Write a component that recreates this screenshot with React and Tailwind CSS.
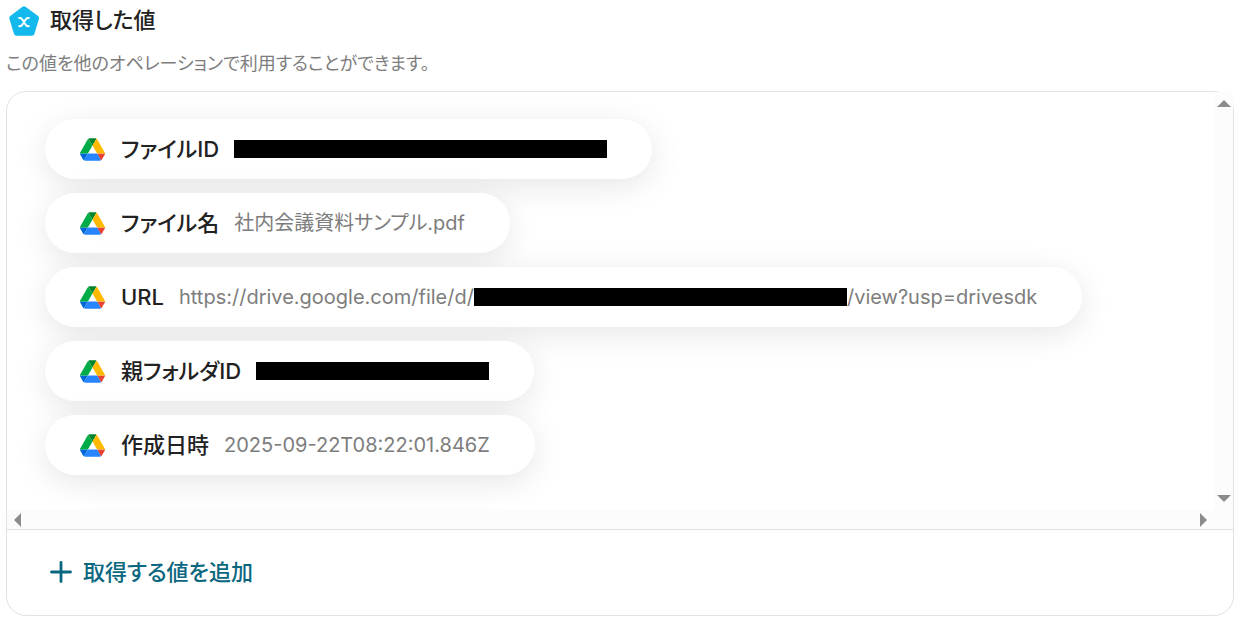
import React from 'react';

const items = [
  { label: 'ファイルID', hidden: 'w-[373px]' },
  { label: 'ファイル名', before: '社内会議資料サンプル.pdf' },
  {
    label: 'URL',
    before: 'https://drive.google.com/file/d/',
    hidden: 'w-[373px]',
    after: '/view?usp=drivesdk',
  },
  { label: '親フォルダID', hidden: 'w-[233px]' },
  { label: '作成日時', before: '2025-09-22T08:22:01.846Z' },
];

const BadgeIcon = () => (
  <svg viewBox="0 0 32 32" className="size-8 shrink-0" aria-hidden="true">
    <path
      d="M16 4.8 28.6 14 24 29.2H8.4L3.8 14Z"
      fill="#13b9ec"
      stroke="#13b9ec"
      strokeWidth="5"
      strokeLinejoin="round"
    />
    <path
      d="M11.2 14h.6c1.2 0 1.9.4 2.5 1.4l3.4 5.4c.6 1 1.3 1.4 2.5 1.4h.6M20.8 14h-.6c-1.2 0-1.9.4-2.5 1.4l-3.4 5.4c-.6 1-1.3 1.4-2.5 1.4h-.6"
      fill="none"
      stroke="#fff"
      strokeWidth="2"
      strokeLinecap="round"
    />
  </svg>
);

const DriveIcon = () => (
  <svg viewBox="0 0 87.3 78" className="h-[23px] w-[25px] shrink-0" aria-hidden="true">
    <path
      d="m6.6 66.85 3.85 6.65c.8 1.4 1.95 2.5 3.3 3.3l13.75-23.8h-27.5c0 1.55.4 3.1 1.2 4.5z"
      fill="#0066da"
    />
    <path
      d="m43.65 25-13.75-23.8c-1.35.8-2.5 1.9-3.3 3.3l-25.4 44a9.06 9.06 0 0 0 -1.2 4.5h27.5z"
      fill="#00ac47"
    />
    <path
      d="m73.55 76.8c1.35-.8 2.5-1.9 3.3-3.3l1.6-2.75 7.65-13.25c.8-1.4 1.2-2.95 1.2-4.5h-27.502l5.852 11.5z"
      fill="#ea4335"
    />
    <path
      d="m43.65 25 13.75-23.8c-1.35-.8-2.9-1.2-4.5-1.2h-18.5c-1.6 0-3.15.45-4.5 1.2z"
      fill="#00832d"
    />
    <path
      d="m59.8 53h-32.3l-13.75 23.8c1.35.8 2.9 1.2 4.5 1.2h50.8c1.6 0 3.15-.45 4.5-1.2z"
      fill="#2684fc"
    />
    <path
      d="m73.4 26.5-12.7-22c-.8-1.4-1.95-2.5-3.3-3.3l-13.75 23.8 16.15 28h27.45c0-1.55-.4-3.1-1.2-4.5z"
      fill="#ffba00"
    />
  </svg>
);

const ValuePill = ({ label, before, hidden, after }) => (
  <li className="flex h-15 items-center rounded-full bg-white pr-[45px] pl-[35px] shadow-[0_7px_32px_rgba(0,0,0,0.1)]">
    <DriveIcon />
    <span className="ml-4 text-[22px] leading-8 font-medium whitespace-nowrap text-[#222]">
      {label}
    </span>
    <span className="ml-[15px] flex items-center text-[20px] leading-7 whitespace-nowrap text-[#7d7d7d]">
      {before}
      {hidden && <span className={`h-[18px] bg-black ${hidden}`} />}
      {after}
    </span>
  </li>
);

const Arrow = ({ points }) => (
  <svg viewBox="0 0 14 14" className="size-[14px]" aria-hidden="true">
    <polygon points={points} fill="#8b8b8b" />
  </svg>
);

const App = () => {
  return (
    <main
      lang="ja"
      className="bg-white px-[6px] pt-1 pb-1 font-['Inter','Noto_Sans_CJK_JP',sans-serif] [font-feature-settings:'palt']"
    >
      <header>
        <div className="flex items-center gap-[10px] pl-[2px]">
          <BadgeIcon />
          <h1 className="text-[22px] leading-8 font-medium text-[#222]">取得した値</h1>
        </div>
        <p className="mt-[14px] text-[18px] leading-7 text-[#7d7d7d]">
          この値を他のオペレーションで利用することができます。
        </p>
      </header>

      <section className="mt-[13px] rounded-[20px] border border-[#e2e2e2] bg-white">
        <div className="grid grid-cols-[1fr_19px]">
          <ul className="flex flex-col items-start gap-[14px] overflow-hidden rounded-tl-[20px] pt-[27px] pr-10 pb-[35px] pl-[38px]">
            {items.map((item) => (
              <ValuePill key={item.label} {...item} />
            ))}
          </ul>
          <div className="flex flex-col items-center justify-between bg-[#fcfcfc] py-[5px]">
            <Arrow points="0,10 7,3 14,10" />
            <Arrow points="0,4 7,11 14,4" />
          </div>
          <div className="flex h-[19px] items-center justify-between bg-[#fcfcfc] px-1">
            <Arrow points="10,0 3,7 10,14" />
            <Arrow points="4,0 11,7 4,14" />
          </div>
          <div className="bg-[#fcfcfc]" />
        </div>
        <div className="border-t border-[#e2e2e2] px-10 pt-[26px] pb-[27px]">
          <button
            type="button"
            className="flex cursor-pointer items-center gap-2 text-[22px] leading-8 font-medium text-[#0b6780]"
          >
            <svg viewBox="0 0 28 28" className="size-7" aria-hidden="true">
              <path
                d="M14 4.5v19M4.5 14h19"
                stroke="currentColor"
                strokeWidth="2.8"
                strokeLinecap="round"
              />
            </svg>
            取得する値を追加
          </button>
        </div>
      </section>
    </main>
  );
};

export default App;
